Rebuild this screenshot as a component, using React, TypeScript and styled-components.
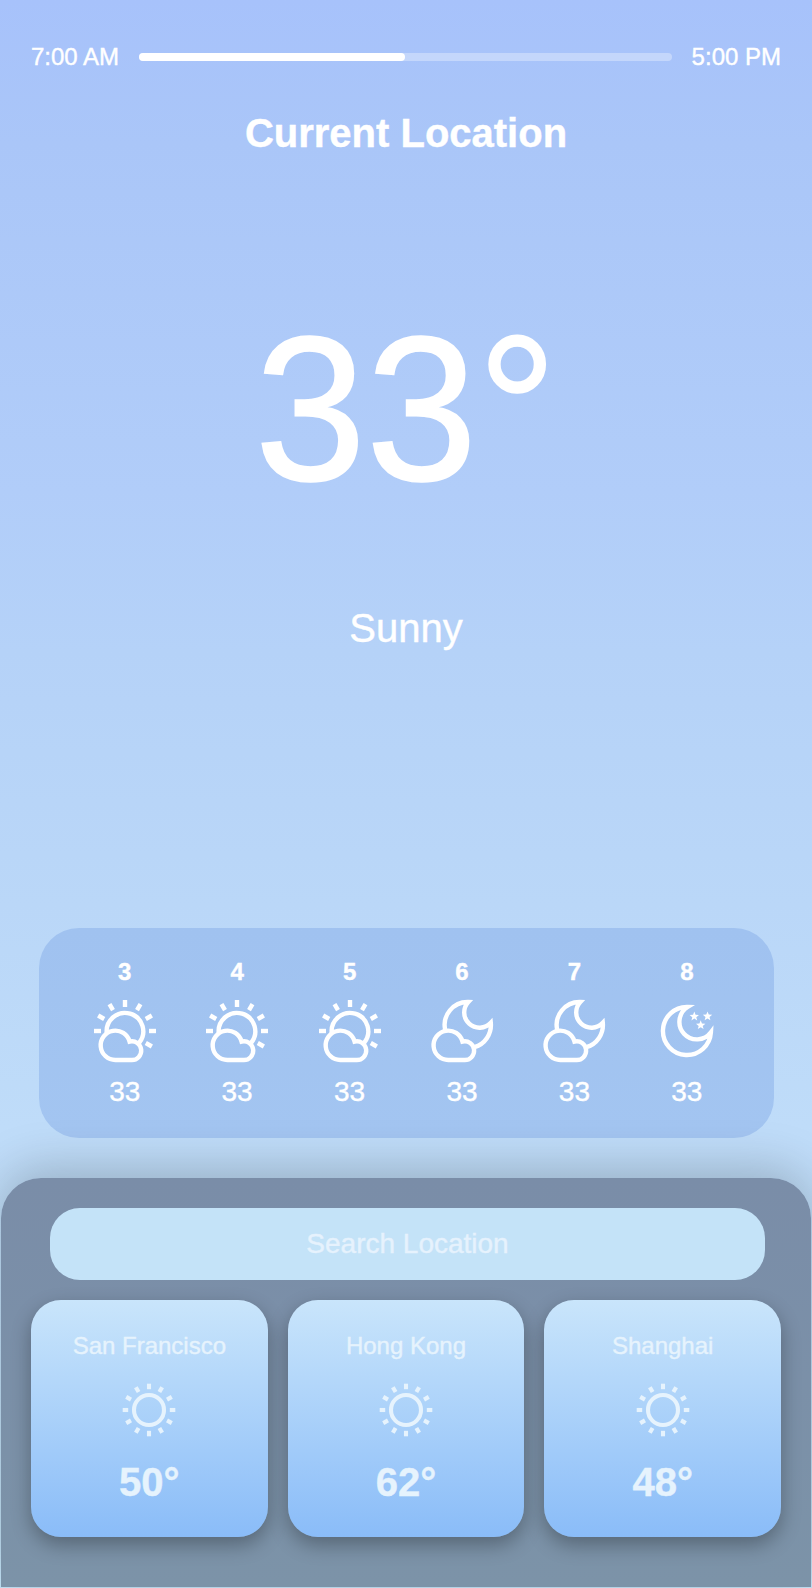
import React from "react";
import styled, { createGlobalStyle } from "styled-components";

const GlobalStyle = createGlobalStyle`
  *, *::before, *::after { box-sizing: border-box; }
  body {
    margin: 0;
    font-family: "Liberation Sans", Arial, Helvetica, sans-serif;
    color: #fff;
    -webkit-text-stroke: 0.4px currentColor;
  }
`;

const Page = styled.div`
  display: flex;
  flex-direction: column;
  height: 1588px;
  padding: 0 1px 1px;
  overflow: hidden;
  background: linear-gradient(
    180deg,
    #a7c2fb 0%,
    #aac6f8 9%,
    #b1cdf9 31%,
    #b5d2f8 41%,
    #bad7f8 57%,
    #bfdcf9 71%,
    #c3e4f8 100%
  );
`;

const DayProgress = styled.header`
  display: flex;
  align-items: center;
  gap: 20px;
  margin-top: 43px;
  padding: 0 30px;
`;

const Time = styled.span`
  font-size: 24px;
  line-height: 28px;
  white-space: nowrap;
`;

const Track = styled.div`
  flex: 1;
  height: 8px;
  border-radius: 4px;
  background: rgba(255, 255, 255, 0.32);
`;

const Elapsed = styled.div<{ $percent: number }>`
  width: ${(p) => p.$percent}%;
  height: 100%;
  border-radius: 4px;
  background: #fff;
`;

const Current = styled.section`
  display: flex;
  flex-direction: column;
  align-items: center;
  height: 857px;
`;

const Place = styled.h1`
  margin: 39px 0 0;
  font-size: 40px;
  line-height: 46px;
  font-weight: 700;
`;

const Degrees = styled.div`
  margin-top: 143px;
  font-size: 200px;
  line-height: 224px;
  -webkit-text-stroke: 1.6px currentColor;
  transform: scaleY(1.03);
  transform-origin: 50% 181px;
`;

const Summary = styled.div`
  margin-top: 82px;
  font-size: 40px;
  line-height: 46px;
`;

const Hours = styled.section`
  display: flex;
  flex: none;
  height: 210px;
  margin: 0 37px 0 38px;
  padding: 30px 31px 30px 29.5px;
  border-radius: 40px;
  background: linear-gradient(180deg, #a0c2f0, #a3c5f1);
`;

const Hour = styled.div`
  display: flex;
  flex: 1;
  flex-direction: column;
  align-items: center;
`;

const HourLabel = styled.div`
  margin-bottom: 13px;
  font-size: 24px;
  line-height: 28px;
  font-weight: 700;
`;

const HourTemp = styled.div`
  margin-top: 13px;
  font-size: 28px;
  line-height: 32px;
`;

const Panel = styled.section`
  flex: none;
  height: 409px;
  margin-top: 40px;
  padding: 30px;
  border-radius: 40px 40px 0 0;
  background: linear-gradient(180deg, #7a8da8, #7c93a8);
  box-shadow: 0 -8px 50px rgba(0, 0, 0, 0.22);
`;

const Search = styled.input`
  display: block;
  width: 715px;
  height: 72px;
  margin: 0 0 20px 19px;
  padding: 0;
  border: 0;
  border-radius: 30px;
  outline: 0;
  background: #c4e3f8;
  color: #e6f3fd;
  font: 28px "Liberation Sans", Arial, sans-serif;
  text-align: center;
  &::placeholder { color: #e6f2fd; opacity: 1; }
`;

const Cities = styled.div`
  display: grid;
  grid-template-columns: repeat(3, 1fr);
  gap: 20px;
`;

const City = styled.article`
  display: flex;
  flex-direction: column;
  align-items: center;
  height: 237px;
  padding-top: 32px;
  border-radius: 30px;
  background: linear-gradient(180deg, #c9e5fb 0%, #8abcf8 100%);
  box-shadow: 0 8px 20px rgba(0, 0, 0, 0.3);
  color: #e6f3fd;
`;

const CityName = styled.div`
  margin-bottom: 18px;
  font-size: 24px;
  line-height: 28px;
`;

const CityTemp = styled.div`
  margin-top: 17px;
  font-size: 40px;
  line-height: 46px;
  font-weight: 700;
`;

const Icon = styled.svg<{ $weight?: number }>`
  display: block;
  width: 64px;
  height: 64px;
  fill: none;
  stroke: currentColor;
  stroke-width: ${(p) => p.$weight ?? 4.4};
  stroke-miterlimit: 10;
`;

const CLOUD =
  "M35.6 41.6A14.7 14.7 0 1 0 21.5 60H37.3A9.35 9.35 0 1 0 35.6 41.6Z";

const SunIcon = () => (
  <Icon viewBox="-32 -32 64 64" $weight={4.1}>
    <circle r="15" />
    {Array.from({ length: 12 }, (_, i) => (
      <path key={i} d="M0 -26.3V-20.8" transform={`rotate(${i * 30})`} />
    ))}
  </Icon>
);

const SunCloudIcon = () => (
  <Icon viewBox="-1 -1 64 64">
    <path d="M12.8 33.5A18.3 18.3 0 1 1 45 43" />
    {[-90, -60, -30, 0, 30, 60, 90, 120].map((a) => (
      <path key={a} d="M31 0V7" transform={`rotate(${a} 31 31)`} />
    ))}
    <path d={CLOUD} />
  </Icon>
);

const MoonCloudIcon = () => (
  <Icon viewBox="-1.9 -1 64 64">
    <path d="M13.3 30A23 23 0 0 1 36.4 2A15.3 15.3 0 1 0 58.9 22.8A23 23 0 0 1 42.5 47.2" />
    <path d={CLOUD} transform="translate(-5 0)" />
  </Icon>
);

const STAR =
  "M0 -4.8L1.25 -1.6L4.7 -1.4L2 .8L2.9 4L0 2.2L-2.9 4L-2 .8L-4.7 -1.4L-1.25 -1.6Z";

const MoonIcon = () => (
  <Icon viewBox="15 19.2 64 64">
    <path d="M47.7 27.2A24 24 0 1 0 70.9 52.6A17.5 17.5 0 1 1 47.7 27.2Z" />
    {["54.3 36.6", "67.5 36.4", "60.7 45.3"].map((at) => (
      <path key={at} d={STAR} transform={`translate(${at})`} fill="currentColor" stroke="none" />
    ))}
  </Icon>
);

const hours = [
  { hour: 3, temp: 33, Glyph: SunCloudIcon },
  { hour: 4, temp: 33, Glyph: SunCloudIcon },
  { hour: 5, temp: 33, Glyph: SunCloudIcon },
  { hour: 6, temp: 33, Glyph: MoonCloudIcon },
  { hour: 7, temp: 33, Glyph: MoonCloudIcon },
  { hour: 8, temp: 33, Glyph: MoonIcon },
];

const cities = [
  { name: "San Francisco", temp: 50 },
  { name: "Hong Kong", temp: 62 },
  { name: "Shanghai", temp: 48 },
];

export default function App() {
  return (
    <>
      <GlobalStyle />
      <Page>
        <DayProgress>
          <Time>7:00 AM</Time>
          <Track>
            <Elapsed $percent={50} />
          </Track>
          <Time>5:00 PM</Time>
        </DayProgress>
        <Current>
          <Place>Current Location</Place>
          <Degrees>33°</Degrees>
          <Summary>Sunny</Summary>
        </Current>
        <Hours>
          {hours.map(({ hour, temp, Glyph }) => (
            <Hour key={hour}>
              <HourLabel>{hour}</HourLabel>
              <Glyph />
              <HourTemp>{temp}</HourTemp>
            </Hour>
          ))}
        </Hours>
        <Panel>
          <Search placeholder="Search Location" />
          <Cities>
            {cities.map(({ name, temp }) => (
              <City key={name}>
                <CityName>{name}</CityName>
                <SunIcon />
                <CityTemp>{temp}°</CityTemp>
              </City>
            ))}
          </Cities>
        </Panel>
      </Page>
    </>
  );
}
